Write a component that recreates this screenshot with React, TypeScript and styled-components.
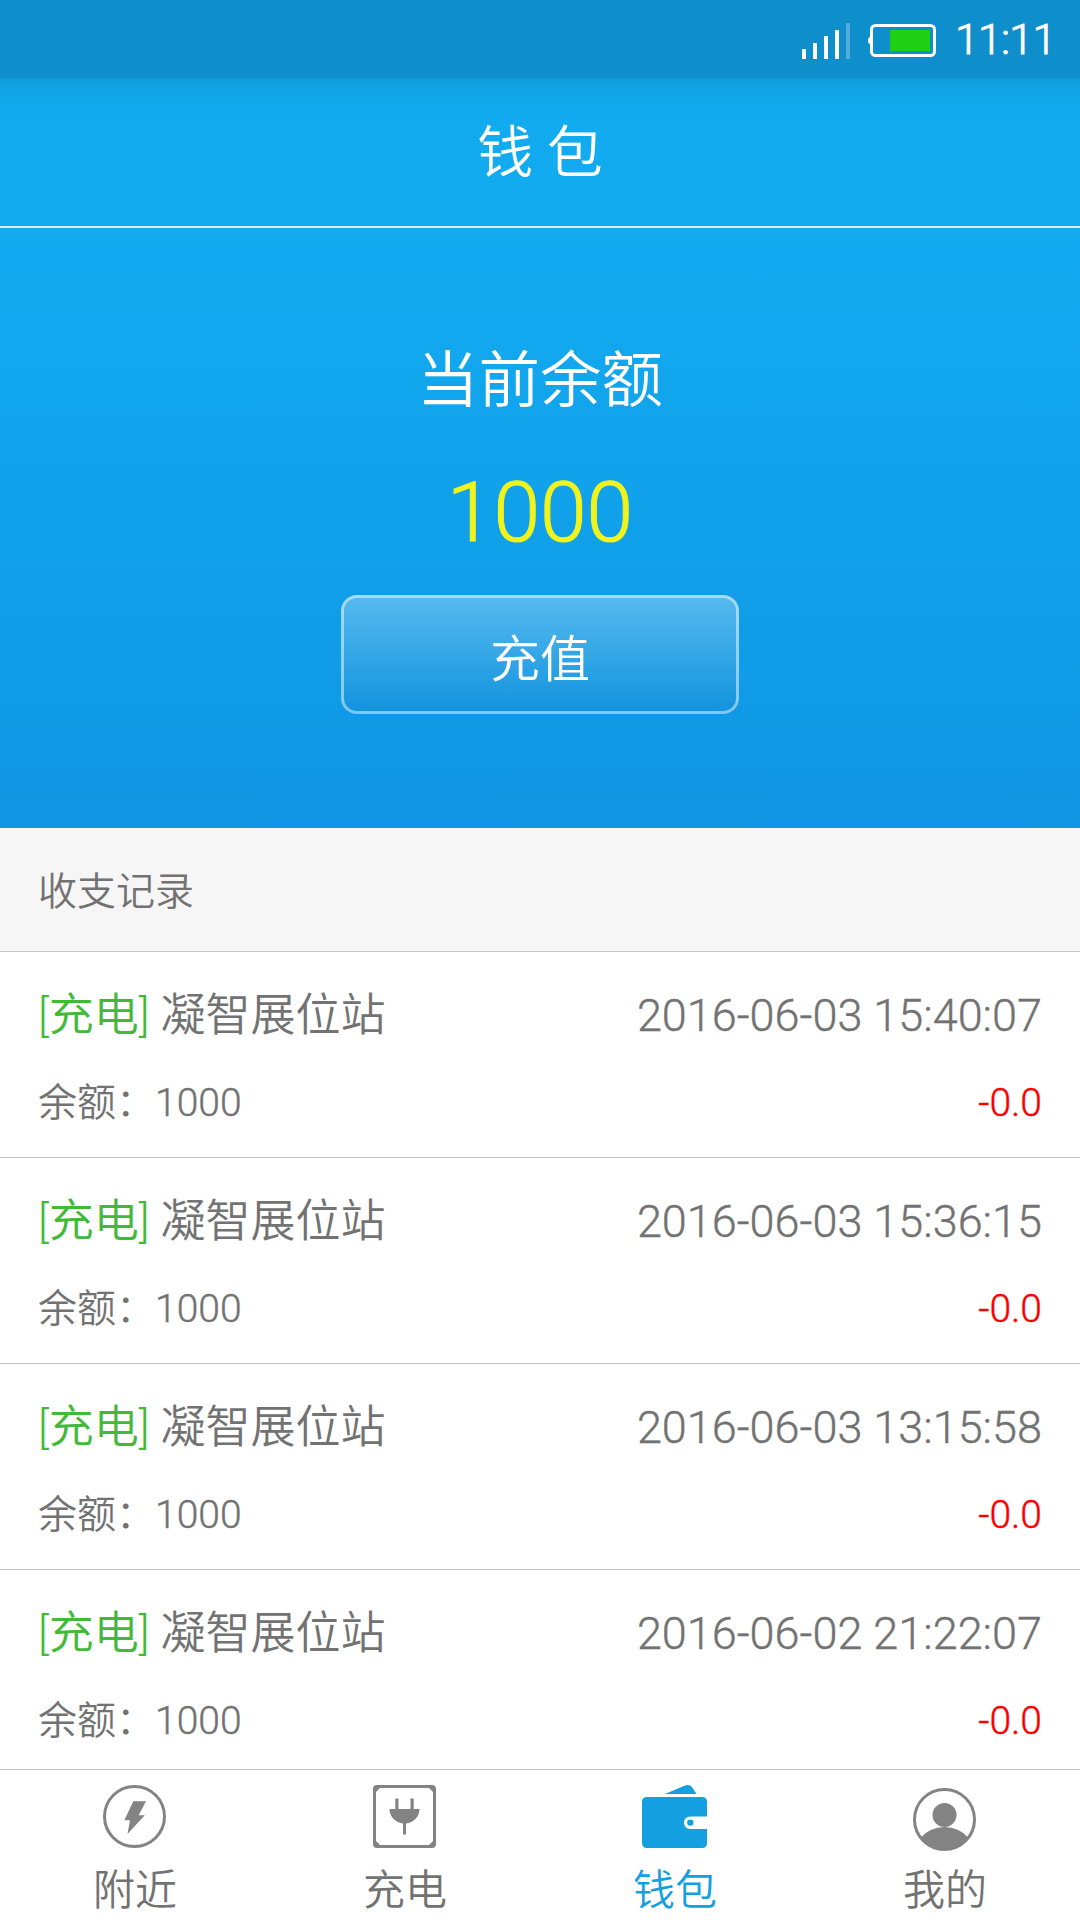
import React from 'react';
import styled, { createGlobalStyle } from 'styled-components';

const GlobalStyle = createGlobalStyle`
  * { box-sizing: border-box; }
  html, body { margin: 0; padding: 0; background: #fff; }
  body {
    font-family: Roboto, 'Noto Sans CJK SC', sans-serif;
    font-weight: 350;
    color: #727272;
  }
`;

const Screen = styled.div`
  width: 1080px;
  height: 1920px;
  display: flex;
  flex-direction: column;
  overflow: hidden;
  background: #fff;
`;

const Hero = styled.div`
  flex: none;
  height: 828px;
  display: flex;
  flex-direction: column;
  background: linear-gradient(#12abf0 0, #12abf0 226px, #0f96e4 828px);
`;

const StatusBar = styled.div`
  flex: none;
  height: 78px;
  display: flex;
  justify-content: flex-end;
  align-items: flex-start;
  background: #0e8eca;
  color: #fff;
`;

const SignalIcon = styled.svg`
  margin: 22px 17px 0 0;
`;

const BatteryIcon = styled.svg`
  margin: 23px 19px 0 0;
`;

const Clock = styled.span`
  width: 125px;
  font-size: 43px;
  line-height: 79px;
  letter-spacing: -0.8px;
  -webkit-text-stroke: 0.9px currentColor;
`;

const TitleBar = styled.header`
  flex: none;
  height: 150px;
  display: flex;
  justify-content: center;
  border-bottom: 2px solid #d5eefb;
  background: linear-gradient(#0f9ad9 0, #11a4e6 10px, #12aaef 32px, rgba(18, 171, 240, 0) 50px);
  color: #fff;
  font-size: 56px;
  line-height: 151px;
`;

const BalancePanel = styled.section`
  flex: 1;
  display: flex;
  flex-direction: column;
  align-items: center;
  padding-top: 113px;
  color: #fff;
`;

const BalanceLabel = styled.div`
  font-size: 61.5px;
  line-height: 80px;
`;

const BalanceValue = styled.div`
  margin-top: 42px;
  font-size: 84px;
  line-height: 100px;
  color: #f0f31c;
  -webkit-text-stroke: 1px currentColor;
`;

const RechargeButton = styled.button`
  width: 398px;
  height: 119px;
  margin: 32px 0 0;
  padding: 10px 0 0;
  border: 3px solid rgba(255, 255, 255, 0.48);
  border-radius: 16px;
  background: linear-gradient(#57baef, #1193de) border-box;
  color: #fff;
  font: inherit;
  font-size: 50px;
  line-height: 60px;
`;

const SectionTitle = styled.h2`
  flex: none;
  margin: 0;
  height: 124px;
  padding: 3px 38px 0;
  border-bottom: 1px solid #c4c4c4;
  background: #f6f6f6;
  font-size: 39px;
  font-weight: inherit;
  line-height: 122px;
`;

const Records = styled.div`
  flex: 1;
  min-height: 0;
  overflow: hidden;
`;

const Record = styled.div`
  height: 206px;
  padding: 33px 38px 0;
  border-bottom: 1px solid #c4c4c4;
`;

const RecordLine = styled.div<{ $size: number; $height: number }>`
  display: flex;
  justify-content: space-between;
  font-size: ${(p) => p.$size}px;
  line-height: ${(p) => p.$height}px;
  white-space: pre;
`;

const Tag = styled.span`
  color: #43b938;
`;

const Figure = styled.span<{ $negative?: boolean }>`
  color: ${(p) => (p.$negative ? '#f80000' : 'inherit')};
  -webkit-text-stroke: 0.4px currentColor;
`;

const TabBar = styled.nav`
  flex: none;
  height: 151px;
  display: grid;
  grid-template-columns: repeat(4, 1fr);
  border-top: 1px solid #c4c4c4;
  background: #fff;
`;

const Tab = styled.div<{ $active?: boolean }>`
  display: flex;
  flex-direction: column;
  align-items: center;
  padding-top: 11px;
  color: ${(p) => (p.$active ? '#149fe0' : '#727272')};
  font-size: 42px;
  line-height: 50px;

  svg {
    flex: none;
    margin-bottom: 13px;
    color: ${(p) => (p.$active ? '#149fe0' : '#838383')};
  }
`;

const NearbyIcon = () => (
  <svg width="70" height="72" viewBox="0 0 70 72">
    <circle cx="34.5" cy="35.5" r="30" fill="none" stroke="currentColor" strokeWidth="3" />
    <path d="M33.300 20.300H46L38.700 34.300H44.800L27.500 53L30 39.300H24.300Z" fill="currentColor" />
  </svg>
);

const PlugIcon = () => (
  <svg width="70" height="72" viewBox="0 0 70 72">
    <path
      fillRule="evenodd"
      d="M7 4H62Q66 4 66 8V63Q66 67 62 67H7Q3 67 3 63V8Q3 4 7 4ZM10 7L6 11V60L10 64H59L63 60V11L59 7Z"
      fill="currentColor"
    />
    <path d="M25.300 17.500h3.200v10.500h-3.200zM40.500 17.500h3.200v10.500h-3.200zM19.500 28H49.500A15 14.500 0 0 1 36 42.500V53.500H33V42.500A15 14.500 0 0 1 19.500 28Z" fill="currentColor" />
  </svg>
);

const WalletIcon = () => (
  <svg width="70" height="72" viewBox="0 0 70 72">
    <path d="M25 13L44.500 4.700Q50 2.700 53 7.500L56.500 13Z" fill="currentColor" />
    <path
      d="M7 16H62Q67 16 67 21V35.500H50.500Q44 36 44 41.800Q44 47.500 50.500 48H67V62Q67 67 62 67H7Q2 67 2 62V21Q2 16 7 16Z"
      fill="currentColor"
    />
    <circle cx="50.300" cy="41.600" r="3.200" fill="currentColor" />
  </svg>
);

const ProfileIcon = () => (
  <svg width="70" height="72" viewBox="0 0 70 72">
    <circle cx="34.5" cy="38.500" r="30" fill="none" stroke="currentColor" strokeWidth="3" />
    <circle cx="34.5" cy="34" r="12" fill="currentColor" />
    <path d="M11 56.500Q20 46 34.500 46Q49 46 58 56.500A30.500 30.500 0 0 1 11 56.500Z" fill="currentColor" />
  </svg>
);

const records = [
  '2016-06-03 15:40:07',
  '2016-06-03 15:36:15',
  '2016-06-03 13:15:58',
  '2016-06-02 21:22:07',
];

const tabs = [
  { label: '附近', Icon: NearbyIcon },
  { label: '充电', Icon: PlugIcon },
  { label: '钱包', Icon: WalletIcon, active: true },
  { label: '我的', Icon: ProfileIcon },
];

export default function App() {
  return (
    <>
      <GlobalStyle />
      <Screen>
        <Hero>
          <StatusBar>
            <SignalIcon width="49" height="38" viewBox="0 0 49 38" fill="#fff">
              <path d="M0 27h4v10h-4zM11 21h4v16h-4zM22 14h4v23h-4zM33 8h4v29h-4z" />
              <path d="M44 1h4v36h-4z" opacity="0.28" />
            </SignalIcon>
            <BatteryIcon width="68" height="35" viewBox="0 0 68 35">
              <rect x="3.500" y="2.500" width="63" height="30" rx="4" fill="none" stroke="#fff" strokeWidth="3" />
              <path d="M3 13.500Q0 14 0 17.500Q0 21 3 21.500Z" fill="#fff" />
              <rect x="22" y="7" width="40" height="21" fill="#20d014" />
            </BatteryIcon>
            <Clock>11:11</Clock>
          </StatusBar>
          <TitleBar>钱 包</TitleBar>
          <BalancePanel>
            <BalanceLabel>当前余额</BalanceLabel>
            <BalanceValue>1000</BalanceValue>
            <RechargeButton>充值</RechargeButton>
          </BalancePanel>
        </Hero>
        <SectionTitle>收支记录</SectionTitle>
        <Records>
          {records.map((time) => (
            <Record key={time}>
              <RecordLine $size={45} $height={62}>
                <span>
                  <Tag>[充电]</Tag> 凝智展位站
                </span>
                <Figure>{time}</Figure>
              </RecordLine>
              <RecordLine $size={39} $height={112}>
                <span>
                  余额：<Figure>1000</Figure>
                </span>
                <Figure $negative>-0.0</Figure>
              </RecordLine>
            </Record>
          ))}
        </Records>
        <TabBar>
          {tabs.map(({ label, Icon, active }) => (
            <Tab key={label} $active={active}>
              <Icon />
              {label}
            </Tab>
          ))}
        </TabBar>
      </Screen>
    </>
  );
}
